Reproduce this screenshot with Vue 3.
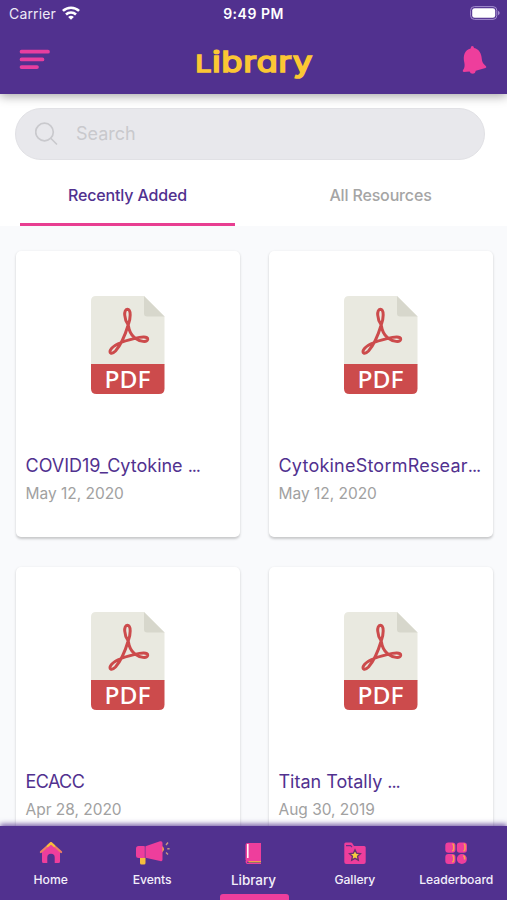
<script setup>
const resources = [
  { title: 'COVID19_Cytokine ', more: true, date: 'May 12, 2020', tone: 'snug' },
  { title: 'CytokineStormResear', more: true, date: 'May 12, 2020', tone: 'regular' },
  { title: 'ECACC', more: false, date: 'Apr 28, 2020', tone: 'caps' },
  { title: 'Titan Totally ', more: true, date: 'Aug 30, 2019', tone: 'snug' },
]
const tabs = ['Home', 'Events', 'Library', 'Gallery', 'Leaderboard']
</script>

<template>
  <div class="screen">
    <header class="header">
      <div class="status">
        <div class="carrier">
          <span>Carrier</span>
          <svg width="18" height="14" viewBox="0 0 18 14" fill="none" stroke="#fff" stroke-width="2.600">
            <path d="M.9 4.900C5.400.6 12.600.6 17.100 4.900" />
            <path d="M4 8.500C6.800 5.900 11.200 5.900 14 8.500" />
            <path d="M9 13.800 6.100 10.900Q9 8.400 11.900 10.900Z" fill="#fff" stroke="none" />
          </svg>
        </div>
        <span class="clock">9:49 PM</span>
        <svg class="battery" width="30" height="14" viewBox="0 0 30 14">
          <rect x=".6" y=".6" width="26.200" height="12.800" rx="3.800" fill="none" stroke="#a58fd0" stroke-width="1" />
          <rect x="2.200" y="2.200" width="23" height="9.600" rx="2.400" fill="#fff" />
          <path d="M28 4.700Q29.700 5.400 29.700 7T28 9.300Z" fill="#a58fd0" />
        </svg>
      </div>
      <div class="bar">
        <svg width="32" height="22" viewBox="0 0 32 22" stroke="#e83e9f" stroke-width="3.700" stroke-linecap="round">
          <path d="M2.500 2.700H29M2.500 10.400H23.500M2.500 18.100H18" />
        </svg>
        <h1 class="title"><span class="initial">L</span>ibrary</h1>
        <svg width="26" height="30" viewBox="0 0 26 30" fill="#ee3e9c">
          <path d="M9.600 3.400Q9.800 1 11.300 1T13 3C18.300 4.300 20.500 8.500 20.800 14Q21 18.200 25 21.200Q25.900 22.400 24.500 22.900L14.800 25.800Q14.500 28.500 12 28.800Q9.200 28.800 8.600 26.600L2.700 27Q1.200 26.500 1.900 25.300Q4.200 22.500 3.400 18C1.600 10 3.800 5 9.600 3.400Z" />
        </svg>
      </div>
    </header>

    <section class="tools">
      <div class="search">
        <svg width="24" height="24" viewBox="0 0 24 24" fill="none" stroke="#c9c9cd" stroke-width="1.700" stroke-linecap="round">
          <circle cx="9.500" cy="10" r="8.800" />
          <path d="M16 16.500 21.500 22" />
        </svg>
        <span>Search</span>
      </div>
      <nav class="filters">
        <span class="filter active">Recently Added</span>
        <span class="filter all">All Resources</span>
      </nav>
    </section>

    <main class="grid">
      <article v-for="item in resources" :key="item.title" class="card">
        <svg class="pdf" width="74" height="98" viewBox="0 0 74 98">
          <path d="M5 0H53L73.500 20.500V69H0V5Q0 0 5 0Z" fill="#e9e9e0" />
          <path d="M53 0 73.500 20.500H56Q53 20.500 53 17.500Z" fill="#d7d7cc" />
          <path d="M0 68H73.500V92.500Q73.500 98 68 98H5.500Q0 98 0 92.500Z" fill="#cc4b4c" />
          <path d="M37.200 29C33 23 32.400 13.500 36.300 13.300C40.500 13.500 39.500 23 37.200 29C34 39.500 28.500 50.500 24.500 55C20.500 59 17.700 56.800 19.600 53.700C22 49.600 31.500 45.300 43 42.600C51 40.500 57 40.400 56.700 43.200C56 46.700 49.500 46 43.500 41.700C39.500 38.500 37.800 33 37.200 29Z" fill="none" stroke="#cc4b4c" stroke-width="3" stroke-linejoin="round" />
          <text x="36.400" y="92" text-anchor="middle" textLength="46" lengthAdjust="spacingAndGlyphs" class="pdf-label">PDF</text>
        </svg>
        <h2 :class="item.tone">{{ item.title }}<span v-if="item.more" class="dots">...</span></h2>
        <p>{{ item.date }}</p>
      </article>
    </main>

    <footer class="tabbar">
      <div v-for="tab in tabs" :key="tab" class="tab" :class="{ current: tab === 'Library' }">
        <svg v-if="tab === 'Home'" width="24" height="24" viewBox="0 0 24 24">
          <path d="M3 10.500 12 3.500 21 10.500V20.500Q21 22 19.500 22H15.700V16.500Q15.700 12.800 12 12.800T8.300 16.500V22H4.500Q3 22 3 20.500Z" fill="#ee3e9c" />
          <path d="M1.900 11 12 2.200 22.100 11" fill="none" stroke="#ef7f62" stroke-width="2.200" stroke-linecap="round" stroke-linejoin="round" />
          <path d="M8.800 5 12 2.200 15.200 5" fill="none" stroke="#f6be3d" stroke-width="2.200" stroke-linecap="round" stroke-linejoin="round" />
        </svg>
        <svg v-else-if="tab === 'Events'" width="36" height="26" viewBox="0 0 36 26">
          <path d="M6 17H11.500V23Q11.500 24.500 10 24.500H7.500Q6 24.500 6 23Z" fill="#f6be3d" />
          <path d="M28 6Q32 9 28 12.500Z" fill="#f5b13f" />
          <rect x="2" y="6" width="10" height="12" rx="2.500" fill="#ee3e9c" />
          <path d="M11.500 6.300 26 1.300Q28.500 .7 28.500 3V19.500Q28.500 21.800 26.200 21L11.500 17.700Z" fill="#ee3e9c" />
          <path d="M11.200 6V18" stroke="#8e3695" stroke-width="1" />
          <path d="m32 5 2-2.500M33.300 8.800H35.600M32 12.500l2 2" stroke="#c9997f" stroke-width="1.400" />
        </svg>
        <svg v-else-if="tab === 'Library'" width="22" height="26" viewBox="0 0 22 26">
          <path d="M5.500 3H19V20H3.500V5Q3.500 3 5.500 3Z" fill="#ee3e9c" />
          <path d="M5.800 4V18" stroke="#fff" stroke-width="1.500" />
          <path d="M19 19.800H5Q3.500 19.900 3.500 21.500T5 24H19V23H6Q5 23 5 21.800H19Z" fill="#ee3e9c" />
          <path d="M6.500 21.800H19" stroke="#f5b63f" stroke-width="1.300" />
        </svg>
        <svg v-else-if="tab === 'Gallery'" width="24" height="24" viewBox="0 0 24 24">
          <path d="M1.300 3Q1.300 1.500 2.800 1.500H8Q9.300 1.500 10 3.500L11 5H21.200Q22.700 5 22.700 6.500V21Q22.700 23 20.700 23H3.300Q1.300 23 1.300 21Z" fill="#ee3e9c" />
          <path d="M3 4.600H7.600L9 6.200" fill="none" stroke="#63308f" stroke-width="1.200" />
          <path d="m12 8.800 1.600 3.400 3.800.5-2.800 2.600.7 3.800-3.300-1.800-3.300 1.800.7-3.800-2.800-2.600 3.800-.5Z" fill="#f6cc3f" stroke="#68336e" stroke-width="1.400" />
        </svg>
        <svg v-else width="24" height="24" viewBox="0 0 24 24">
          <g fill="#ee3e9c">
            <rect x="1.300" y="1.500" width="10.200" height="10.200" rx="3" />
            <rect x="12.800" y="1.500" width="10.200" height="10.200" rx="3" />
            <rect x="1.300" y="13" width="10.200" height="10" rx="3" />
            <circle cx="17.900" cy="18" r="5" />
          </g>
          <path d="M8.300 3Q9.700 3 9.700 5V8Q9.700 9.700 8.200 10M19.700 3Q21 3 21 5V8Q21 9.700 19.500 10M8.300 14.500Q9.700 14.500 9.700 16.500V19Q9.700 20.800 8.200 21M19.300 14.500Q21.300 16 20.500 18.500" fill="none" stroke="#f7a64b" stroke-width="1.500" />
        </svg>
        <span>{{ tab }}</span>
      </div>
    </footer>
  </div>
</template>

<style>
body { margin: 0; }
</style>

<style scoped>
* { box-sizing: border-box; }
svg { display: block; flex: none; }
.screen {
  width: 507px; height: 900px; overflow: hidden;
  display: flex; flex-direction: column;
  background: #f9fafc; font-family: Inter, sans-serif;
}
.header {
  position: relative; z-index: 1; flex: none; height: 94px;
  background: #51318f; color: #fff;
  box-shadow: 0 2px 10px rgba(0, 0, 0, .36);
}
.status {
  height: 28px; padding: 0 7px 0 9px;
  display: grid; grid-template-columns: 1fr auto 1fr; align-items: center;
}
.carrier { display: flex; gap: 6px; align-items: center; font-size: 14px; letter-spacing: .15px; color: #eee9f6; }
.carrier span { margin-top: -1px; }
.carrier svg { margin-top: -2px; }
.clock { margin: -1px 2px 0 0; font-size: 14px; font-weight: 600; letter-spacing: .5px; }
.battery { justify-self: end; margin-top: -2px; }
.bar { height: 64px; padding: 0 20px 0 19px; display: flex; justify-content: space-between; align-items: center; }
.title {
  margin: 5px 3px 0 0; font: 400 28px/36px Inter, sans-serif; letter-spacing: .8px;
  font-feature-settings: "cv11"; white-space: nowrap; transform: scaleX(1.22);
  color: #fbc734; -webkit-text-stroke: 1.700px #fbc734; stroke-linejoin: round;
}
.initial { font-size: 23px; }
.tools { flex: none; height: 132px; padding-top: 14px; background: #fff; }
.search {
  width: 470px; height: 52px; margin-left: 15px; padding-left: 19px;
  display: flex; align-items: center; gap: 17px;
  border: 1px solid #e1e1e5; border-radius: 26px; background: #e8e8ec;
  color: #c9c9cd; font-size: 18px; letter-spacing: 0;
}
.search span { margin-top: -1px; }
.filters { height: 66px; padding: 0 20px; display: grid; grid-template-columns: 215px 215px; justify-content: space-between; }
.filter {
  height: 66px; padding-top: 25px; text-align: center;
  font-size: 16px; line-height: 20px; font-weight: 500; letter-spacing: -.16px; color: #a5a5a5;
}
.all { padding-left: 2px; }
.active { color: #51318f; border-bottom: 3px solid #e83e91; }
.grid {
  flex: 1; min-height: 0; padding: 25px 14.500px 0 15.500px; overflow: hidden;
  display: grid; grid-template-columns: 224px 224px; justify-content: space-between;
  grid-auto-rows: 286px; row-gap: 30px;
}
.card {
  padding: 45px 10px 0; display: flex; flex-direction: column;
  background: #fff; border-radius: 5px; box-shadow: 0 1.500px 2.500px rgba(0, 0, 0, .2);
}
.pdf { margin-left: 65px; }
.pdf-label { font: 500 24px "Noto Sans", sans-serif; fill: #fff; }
.card h2 {
  margin: 60px 0 0; font-size: 18px; line-height: 24px; font-weight: 400;
  white-space: nowrap; color: #51318f; letter-spacing: 0;
}
.card h2.regular { letter-spacing: .22px; }
.card h2.caps { letter-spacing: -.6px; }
.dots { letter-spacing: -1.100px; }
.card p { margin: 6px 0 0; font-size: 15.500px; line-height: 20px; color: #a1a1a1; letter-spacing: -.02px; }
.tabbar {
  position: relative; flex: none; height: 74px; padding: 0;
  display: grid; grid-template-columns: repeat(5, 1fr);
  background: #51318f; box-shadow: 0 -2px 5px rgba(81, 49, 143, .75);
}
.tab {
  position: relative; padding-top: 14px; display: flex; flex-direction: column; align-items: center;
  color: #f3effa; font-size: 12.200px; font-weight: 500;
}
.tab svg { height: 26px; }
.tab span { margin-top: 6px; line-height: 16px; letter-spacing: -.05px; }
.current { font-size: 13.500px; }
.current::after {
  content: ""; position: absolute; bottom: 0; left: 17px; width: 69px; height: 6px;
  border-radius: 3px 3px 0 0; background: #ee3e9c;
}
</style>
